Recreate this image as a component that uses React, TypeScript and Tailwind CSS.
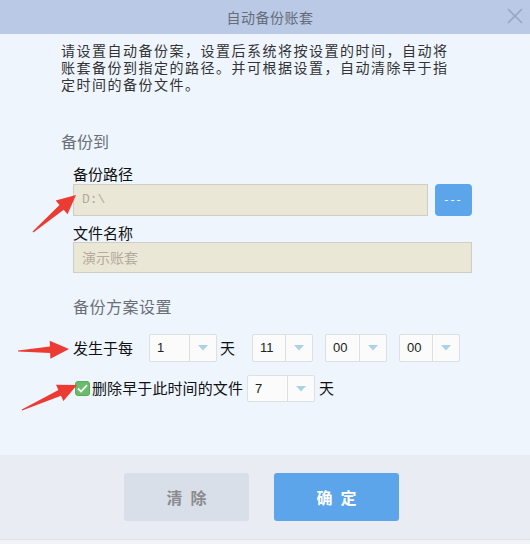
import React from "react";

type P = [number, number];

function arrowPoints(t: P, p: P, L = 19, W = 9, w = 3.2, tw = 0.6): string {
  const dx = p[0] - t[0];
  const dy = p[1] - t[1];
  const len = Math.hypot(dx, dy);
  const ux = dx / len;
  const uy = dy / len;
  const nx = -uy;
  const ny = ux;
  const bx = p[0] - ux * L;
  const by = p[1] - uy * L;
  const pts: P[] = [
    [t[0] + nx * tw, t[1] + ny * tw],
    [bx + nx * w, by + ny * w],
    [bx + nx * W, by + ny * W],
    [p[0], p[1]],
    [bx - nx * W, by - ny * W],
    [bx - nx * w, by - ny * w],
    [t[0] - nx * tw, t[1] - ny * tw],
  ];
  return pts.map((q) => `${q[0].toFixed(1)},${q[1].toFixed(1)}`).join(" ");
}

function Select({ value, textW, h }: { value: string; textW: number; h: number }) {
  return (
    <div
      className="flex border border-[#dcdfe3] bg-[#fbfbfb] rounded-[2px]"
      style={{ height: h }}
    >
      <div
        className="flex items-center pl-[7px] text-[13px] text-[#222] border-r border-[#dcdfe3]"
        style={{ width: textW, fontFamily: "'Liberation Sans', Arial, sans-serif" }}
      >
        {value}
      </div>
      <div className="w-[26px] flex items-center justify-center">
        <svg width="10" height="6" viewBox="0 0 10 6">
          <polygon points="0,0 10,0 5,5.5" fill="#a9d2e6" />
        </svg>
      </div>
    </div>
  );
}

export default function App() {
  const font = { fontFamily: "'Noto Sans CJK SC', 'Noto Sans', sans-serif" };
  return (
    <div className="relative w-[530px] h-[544px] flex flex-col bg-[#eef5fd] overflow-hidden" style={font}>
      {/* Title bar */}
      <div className="h-[34px] shrink-0 bg-[#b9c9e6] flex items-center justify-center relative">
        <span className="text-[14px] tracking-[0.5px] text-[#666c78] pl-[10px]">自动备份账套</span>
        <svg className="absolute right-[7px] top-[8px]" width="16" height="16" viewBox="0 0 16 16">
          <path d="M1 1 L15 15 M15 1 L1 15" stroke="#9ba6bd" strokeWidth="1.6" />
        </svg>
      </div>

      {/* Body */}
      <div className="flex-1 pl-[61px] pt-[8px]">
        <div className="text-[14px] leading-[17px] tracking-[1.5px] text-[#333] whitespace-nowrap">
          <div>请设置自动备份案，设置后系统将按设置的时间，自动将</div>
          <div>账套备份到指定的路径。并可根据设置，自动清除早于指</div>
          <div>定时间的备份文件。</div>
        </div>

        <div className="mt-[39px] h-[18px] leading-[18px] text-[16px] text-[#6b6f76]">备份到</div>

        <div className="pl-[12px]">
          <div className="mt-[15px] h-[18px] leading-[18px] text-[15px] text-[#111]">备份路径</div>
          <div className="mt-[1px] flex h-[32px]">
            <div className="w-[355px] h-full bg-[#ebe7d7] border border-[#cfcdc6] flex items-center pl-[8px]">
              <span className="text-[13px] text-[#b3ab9b]" style={{ fontFamily: "'Liberation Mono', monospace" }}>
                D:\
              </span>
            </div>
            <div className="ml-[7px] w-[37px] h-full bg-[#5ca5ea] rounded-[4px] flex items-center justify-center">
              <span className="text-white text-[12px] tracking-[2px] leading-none pb-[2px]">---</span>
            </div>
          </div>

          <div className="mt-[8px] h-[18px] leading-[18px] text-[15px] text-[#111]">文件名称</div>
          <div className="w-[399px] h-[31px] bg-[#ebe7d7] border border-[#cfcdc6] flex items-center pl-[8px]">
            <span className="text-[14px] text-[#b3ab9b]">演示账套</span>
          </div>

          <div className="mt-[24px] h-[18px] leading-[18px] text-[16px] tracking-[0.5px] text-[#6b6f76]">备份方案设置</div>

          <div className="mt-[19px] flex items-center h-[28px]">
            <div className="w-[60px] text-[15px] text-[#111]">发生于每</div>
            <div className="ml-[16px]">
              <Select value="1" textW={40} h={28} />
            </div>
            <div className="ml-[3px] text-[15px] text-[#111]">天</div>
            <div className="ml-[17px]">
              <Select value="11" textW={33} h={28} />
            </div>
            <div className="ml-[12px]">
              <Select value="00" textW={34} h={28} />
            </div>
            <div className="ml-[12px]">
              <Select value="00" textW={33} h={28} />
            </div>
          </div>

          <div className="mt-[13px] flex items-center h-[27px]">
            <div className="ml-[2px] w-[15px] h-[15px] rounded-[3px] bg-[#67bd6a] border border-[#5aa95d] flex items-center justify-center">
              <svg width="11" height="9" viewBox="0 0 11 9">
                <path d="M1 4.5 L4 7.5 L10 1.2" stroke="#ffffff" strokeWidth="1.8" fill="none" />
              </svg>
            </div>
            <div className="ml-[2px] text-[15px] text-[#111] tracking-[0.1px]">删除早于此时间的文件</div>
            <div className="ml-[4px]">
              <Select value="7" textW={40} h={27} />
            </div>
            <div className="ml-[4px] text-[15px] text-[#111]">天</div>
          </div>
        </div>
      </div>

      {/* Footer */}
      <div className="h-[85px] shrink-0 bg-[#e9edf3] border-b border-[#dde3ec] flex justify-center pt-[18px] gap-[25px] pr-[7px]">
        <div className="w-[125px] h-[48px] rounded-[3px] bg-[#d9dfe8] flex items-center justify-center">
          <span className="text-[16px] font-bold tracking-[8px] pl-[8px] text-[#8a8c90]">清除</span>
        </div>
        <div className="w-[125px] h-[48px] rounded-[3px] bg-[#5ca5ea] flex items-center justify-center">
          <span className="text-[16px] font-bold tracking-[8px] pl-[8px] text-white">确定</span>
        </div>
      </div>
      <div className="h-[4px] shrink-0 bg-[#f1f3f7]" />

      {/* Red annotation arrows */}
      <svg className="absolute left-0 top-0 pointer-events-none" width="530" height="544">
        <polygon points={arrowPoints([33, 232], [76, 195])} fill="#ec3b33" />
        <polygon points={arrowPoints([18, 351], [69, 349])} fill="#ec3b33" />
        <polygon points={arrowPoints([22, 410], [77, 385])} fill="#ec3b33" />
      </svg>
    </div>
  );
}
